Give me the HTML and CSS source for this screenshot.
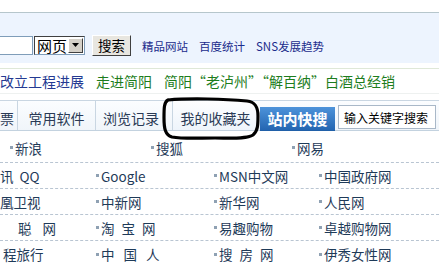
FILE: index.html
```html
<!DOCTYPE html>
<html lang="zh">
<head>
<meta charset="utf-8">
<link rel="stylesheet" href="styles.css">
</head>
<body>
<div class="page">
  <div class="topspace"></div>
  <div class="band">
    <div class="searchrow">
      <input class="q" type="text">
      <div class="sel"><span class="seltext">网页</span><span class="selbtn"><svg width="9" height="5" viewBox="0 0 9 5"><path d="M1 0h7L4.5 4z" fill="#000"/></svg></span></div>
      <button class="sbtn">搜索</button>
      <a class="tl">精品网站</a>
      <a class="tl">百度统计</a>
      <a class="tl">SNS发展趋势</a>
    </div>
  </div>
  <div class="gap"></div>
  <div class="news">
    <span class="blue">改立工程进展</span>
    <span class="green">走进简阳</span>
    <span class="green">简阳“老泸州”“解百纳”白酒总经销</span>
  </div>
  <div class="tabbar">
    <div class="tab t0">票</div>
    <div class="tab t1">常用软件</div>
    <div class="tab t2">浏览记录</div>
    <div class="tab t3 cur">我的收藏夹</div>
    <div class="quick">站内快搜</div>
    <input class="kw" type="text" value="输入关键字搜索">
  </div>
  <div class="list">
    <div class="row r3">
      <span class="it">新浪</span><span class="it">搜狐</span><span class="it">网易</span>
    </div>
    <div class="row r4">
      <span class="it first">讯&nbsp;&nbsp;QQ</span><span class="it">Google</span><span class="it">MSN中文网</span><span class="it">中国政府网</span>
    </div>
    <div class="row r4">
      <span class="it first">凰卫视</span><span class="it">中新网</span><span class="it">新华网</span><span class="it">人民网</span>
    </div>
    <div class="row r4">
      <span class="it first ind sp3">聪网</span><span class="it sp1">淘宝网</span><span class="it">易趣购物</span><span class="it">卓越购物网</span>
    </div>
    <div class="row r4 last">
      <span class="it first ind2">程旅行</span><span class="it sp2">中国人</span><span class="it sp1">搜房网</span><span class="it">伊秀女性网</span>
    </div>
  </div>
  <svg class="mark" width="439" height="268" viewBox="0 0 439 268">
    <path d="M168 100 C190 98 225 99 247 101 C256 102 258 108 258 116 C258 124 258 131 253 135 C247 139 232 138 215 138 C198 138 183 139 172 137 C165 135 164 128 164 118 C164 108 164 102 168 100" fill="none" stroke="#000" stroke-width="3.2" stroke-linejoin="round" stroke-linecap="round"/>
  </svg>
</div>
</body>
</html>
```
FILE: styles.css
```css
html, body { margin: 0; padding: 0; }
body {
  width: 439px; height: 268px; overflow: hidden; background: #fff;
  font-family: "Noto Sans CJK SC", "Noto Sans", sans-serif;
}
.page { position: relative; width: 439px; height: 268px; overflow: hidden; }
.topspace { height: 12px; }
.band {
  height: 50px; border-top: 1px solid #b6c6cc; background: #edf4fe;
  display: flex; align-items: flex-end;
}
.searchrow { display: flex; align-items: center; height: 21px; margin-bottom: 7px; margin-left: -60px; }
.q {
  box-sizing: border-box; width: 93px; height: 19px; margin: 0; padding: 0;
  border: 1px solid #7f9db9; background: #fff;
}
.sel {
  box-sizing: border-box; width: 51px; height: 19px; margin-left: 1px;
  border: 1px solid #7f9db9; border-top-color: #404040; border-left-color: #404040;
  background: #fff; display: flex; align-items: center; justify-content: space-between;
}
.seltext { font-size: 15px; line-height: 17px; padding-left: 2px; color: #000; }
.selbtn {
  box-sizing: border-box; width: 15px; height: 15px; margin-right: 1px;
  background: #d4d0c8; border: 1px solid; border-color: #fff #404040 #404040 #fff;
  display: flex; align-items: center; justify-content: center;
}
.sbtn {
  box-sizing: border-box; height: 21px; width: 39px; margin: 0 0 0 7px; padding: 0;
  font-family: inherit; font-size: 13.5px; line-height: 17px; color: #000;
  background: #e8e6e0; border: 1px solid; border-color: #fff #404040 #404040 #fff;
}
.tl { font-size: 11.5px; color: #1b2c8c; margin-left: 11px; line-height: 16px; }
.tl + .tl { margin-left: 11px; }
.gap { height: 5px; border-bottom: 1px solid #dfe8d8; }
.news {
  height: 24px; display: flex; align-items: center; gap: 12px;
  font-size: 14px; border-bottom: 1px solid #eef1f0; white-space: nowrap;
}
.news .blue { color: #243a92; }
.news .green { color: #1d7d1d; }
.tabbar {
  margin-top: 6px; height: 31px; box-sizing: border-box; display: flex; align-items: stretch;
  border-top: 1px solid #c9d6e2; border-bottom: 1px solid #c3d2df;
  background: linear-gradient(#fbfdff, #f0f5fa);
}
.tab {
  box-sizing: border-box; display: flex; align-items: center; justify-content: center;
  font-size: 14px; color: #2a3a55; border-right: 1px solid #c9d6e2; padding-top: 5px;
}
.t0 { width: 18px; justify-content: flex-start; }
.t1 { width: 78px; }
.t2 { width: 70px; border-right: none; }
.t3 { width: 86px; margin-left: 6px; border-left: 1px solid #c9d6e2; border-right: none; background: linear-gradient(#fdfeff, #eef4fb); }
.quick {
  margin-top: 6px; margin-left: 2px; width: 75px; box-sizing: border-box;
  background: linear-gradient(#4d93da, #2466b2); color: #fff; font-weight: bold;
  font-size: 15px; display: flex; align-items: center; justify-content: center;
  border-bottom: 1px solid #2060a8; margin-bottom: -1px;
}
.kw {
  box-sizing: border-box; width: 98px; height: 24px; margin: 4px 0 0 3px; padding: 0 0 0 5px;
  border: 1px solid #a9b8c8; background: #fff; font-family: inherit; font-size: 12px; color: #000;
}
.list { padding-top: 2px; }
.row {
  height: 26px; box-sizing: border-box; display: grid; align-items: center;
  border-bottom: 1px dashed #b9c5d2; font-size: 13.5px; color: #1e3a58;
}
.row.last { border-bottom: none; }
.r3 { grid-template-columns: 141px 141px 141px; padding-left: 10px; height: 30px; }
.r4 { grid-template-columns: 96px 118px 105px auto; }
.it { display: flex; align-items: center; white-space: nowrap; }
.it::before {
  content: ""; width: 3px; height: 3px; background: #8fa1b3; margin-right: 2px;
}
.it.first::before { display: none; }
.it.ind { padding-left: 18px; }
.it.ind2 { padding-left: 3px; }
.sp1 { letter-spacing: 7px; }
.sp2 { letter-spacing: 9px; }
.sp3 { letter-spacing: 11px; }
.mark { position: absolute; left: 0; top: 0; pointer-events: none; }
```
